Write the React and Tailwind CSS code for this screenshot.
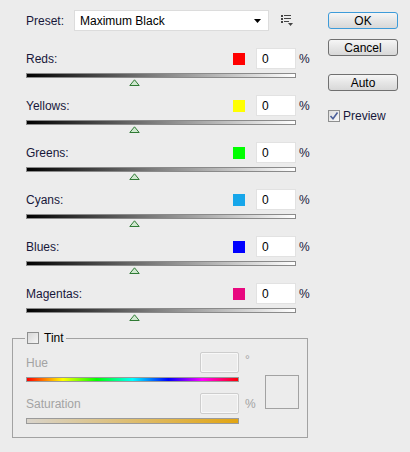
const channels = [
  { name: "Reds", swatch: "bg-[#ff0000]" },
  { name: "Yellows", swatch: "bg-[#ffff00]" },
  { name: "Greens", swatch: "bg-[#00ff00]" },
  { name: "Cyans", swatch: "bg-[#16a6ea]" },
  { name: "Blues", swatch: "bg-[#0000ff]" },
  { name: "Magentas", swatch: "bg-[#e8087f]" },
];

const Thumb = () => (
  <svg className="ml-[103px] mt-[1px]" width="11" height="7" viewBox="0 0 11 7">
    <path d="M5.5 0.8 L10.2 6.5 H0.8 Z" fill="#cfe8cf" stroke="#2f7a34" strokeWidth="1" />
  </svg>
);

const ChannelRow = ({ name, swatch }) => (
  <div className="h-[47px]">
    <div className="flex h-[21px] items-center">
      <span className="w-[207px] shrink-0">{name}:</span>
      <span className={`h-3 w-3 shrink-0 ${swatch}`} />
      <div className="ml-[11px] flex h-[21px] w-[40px] shrink-0 items-center border border-[#e2e2e2] bg-white pl-[5px] text-black">
        0
      </div>
      <span className="ml-[3px]">%</span>
    </div>
    <div className="mt-[4px] flex flex-col">
      <div className="h-[5px] w-[270px] border border-[#8a8a8a] bg-[linear-gradient(to_right,#000,#777_45%,#fff)]" />
      <Thumb />
    </div>
  </div>
);

const Button = ({ children, focused }) => (
  <button
    className={`flex h-[17px] w-[70px] items-center justify-center rounded-[3px] border text-black ${
      focused ? "border-[#3d9bd9]" : "border-[#707070]"
    } bg-[linear-gradient(#f6f6f6,#e6e6e6_50%,#d8d8d8)]`}
  >
    {children}
  </button>
);

const DisabledBox = () => (
  <div className="h-[21px] w-[39px] shrink-0 rounded-[2px] border border-[#cdcdcd] bg-[#ececec] shadow-[inset_0_0_0_1px_#f8f8f8]" />
);

export default function App() {
  return (
    <div className="flex h-[452px] w-[410px] bg-[#ececec] font-['Liberation_Sans',Arial,sans-serif] text-[12px] text-[#17173a]">
      <div className="flex w-[328px] flex-col pt-[10px]">
        <div className="flex h-[21px] items-center pl-[26px]">
          <span className="w-[48px]">Preset:</span>
          <div className="flex h-[21px] w-[195px] items-center border border-[#dcdcdc] bg-white pl-[5px] pr-[7px] text-black">
            <span className="flex-1">Maximum Black</span>
            <svg width="7" height="4" viewBox="0 0 7 4">
              <path d="M0 0 H7 L3.5 4 Z" fill="#000" />
            </svg>
          </div>
          <svg className="ml-[12px]" width="12" height="11" viewBox="0 0 12 11">
            <g fill="#444">
              <rect x="0" y="0" width="2" height="2" />
              <rect x="3" y="0" width="7" height="1" />
              <rect x="0" y="3" width="2" height="2" />
              <rect x="3" y="3" width="7" height="1" />
              <rect x="0" y="6" width="2" height="2" />
              <rect x="3" y="6" width="5" height="1" />
              <path d="M7 8 H12 L9.5 11 Z" />
            </g>
          </svg>
        </div>

        <div className="mt-[17px] pl-[26px]">
          {channels.map((c) => (
            <ChannelRow key={c.name} {...c} />
          ))}
        </div>

        <fieldset className="ml-[12px] mt-[1px] w-[296px] border border-[#a2a2a2] pb-[13px] pl-[12px] pt-[7px]">
          <legend className="flex h-[14px] items-center px-[2px]">
            <svg width="12" height="12" viewBox="0 0 12 12">
              <defs>
                <linearGradient id="cbg" x1="0" y1="0" x2="1" y2="1">
                  <stop offset="0" stopColor="#d6d6d6" />
                  <stop offset="1" stopColor="#f7f7f7" />
                </linearGradient>
              </defs>
              <rect x="0.5" y="0.5" width="11" height="11" fill="url(#cbg)" stroke="#8e8f8f" />
            </svg>
            <span className="ml-[5px] text-black">Tint</span>
          </legend>
          <div className="ml-[1px] flex items-start">
            <div className="flex w-[239px] shrink-0 flex-col text-[#a3a3a3]">
              <div className="flex h-[21px] items-center">
                <span className="w-[174px] shrink-0">Hue</span>
                <DisabledBox />
                <span className="ml-[6px] -mt-[6px]">°</span>
              </div>
              <div className="mt-[4px] h-[5px] w-[213px] border border-[#9a9a9a] bg-[linear-gradient(to_right,#ff0000,#ffff00_17%,#00ff00_33%,#00ffff_50%,#0000ff_67%,#ff00ff_83%,#ff0000)]" />
              <div className="mt-[11px] flex h-[21px] items-center">
                <span className="w-[174px] shrink-0">Saturation</span>
                <DisabledBox />
                <span className="ml-[6px]">%</span>
              </div>
              <div className="mt-[4px] h-[6px] w-[213px] border border-[#9a9a9a] bg-[linear-gradient(to_right,#d9d4cb,#e2a512)]" />
            </div>
            <div className="mt-[23px] h-[34px] w-[34px] shrink-0 border border-[#a2a2a2]" />
          </div>
        </fieldset>
      </div>

      <div className="flex w-[70px] flex-col pt-[12px]">
        <Button focused>OK</Button>
        <div className="mt-[10px]">
          <Button>Cancel</Button>
        </div>
        <div className="mt-[18px]">
          <Button>Auto</Button>
        </div>
        <div className="mt-[16px] flex items-center">
          <svg width="12" height="12" viewBox="0 0 12 12">
            <defs>
              <linearGradient id="pbg" x1="0" y1="0" x2="1" y2="1">
                <stop offset="0" stopColor="#dcdcdc" />
                <stop offset="1" stopColor="#fafafa" />
              </linearGradient>
            </defs>
            <rect x="0.5" y="0.5" width="11" height="11" fill="url(#pbg)" stroke="#8e8f8f" />
            <path d="M2.5 6 L5 8.8 L9.5 2.5" fill="none" stroke="#4b5f9a" strokeWidth="1.6" />
          </svg>
          <span className="ml-[3px]">Preview</span>
        </div>
      </div>
    </div>
  );
}
